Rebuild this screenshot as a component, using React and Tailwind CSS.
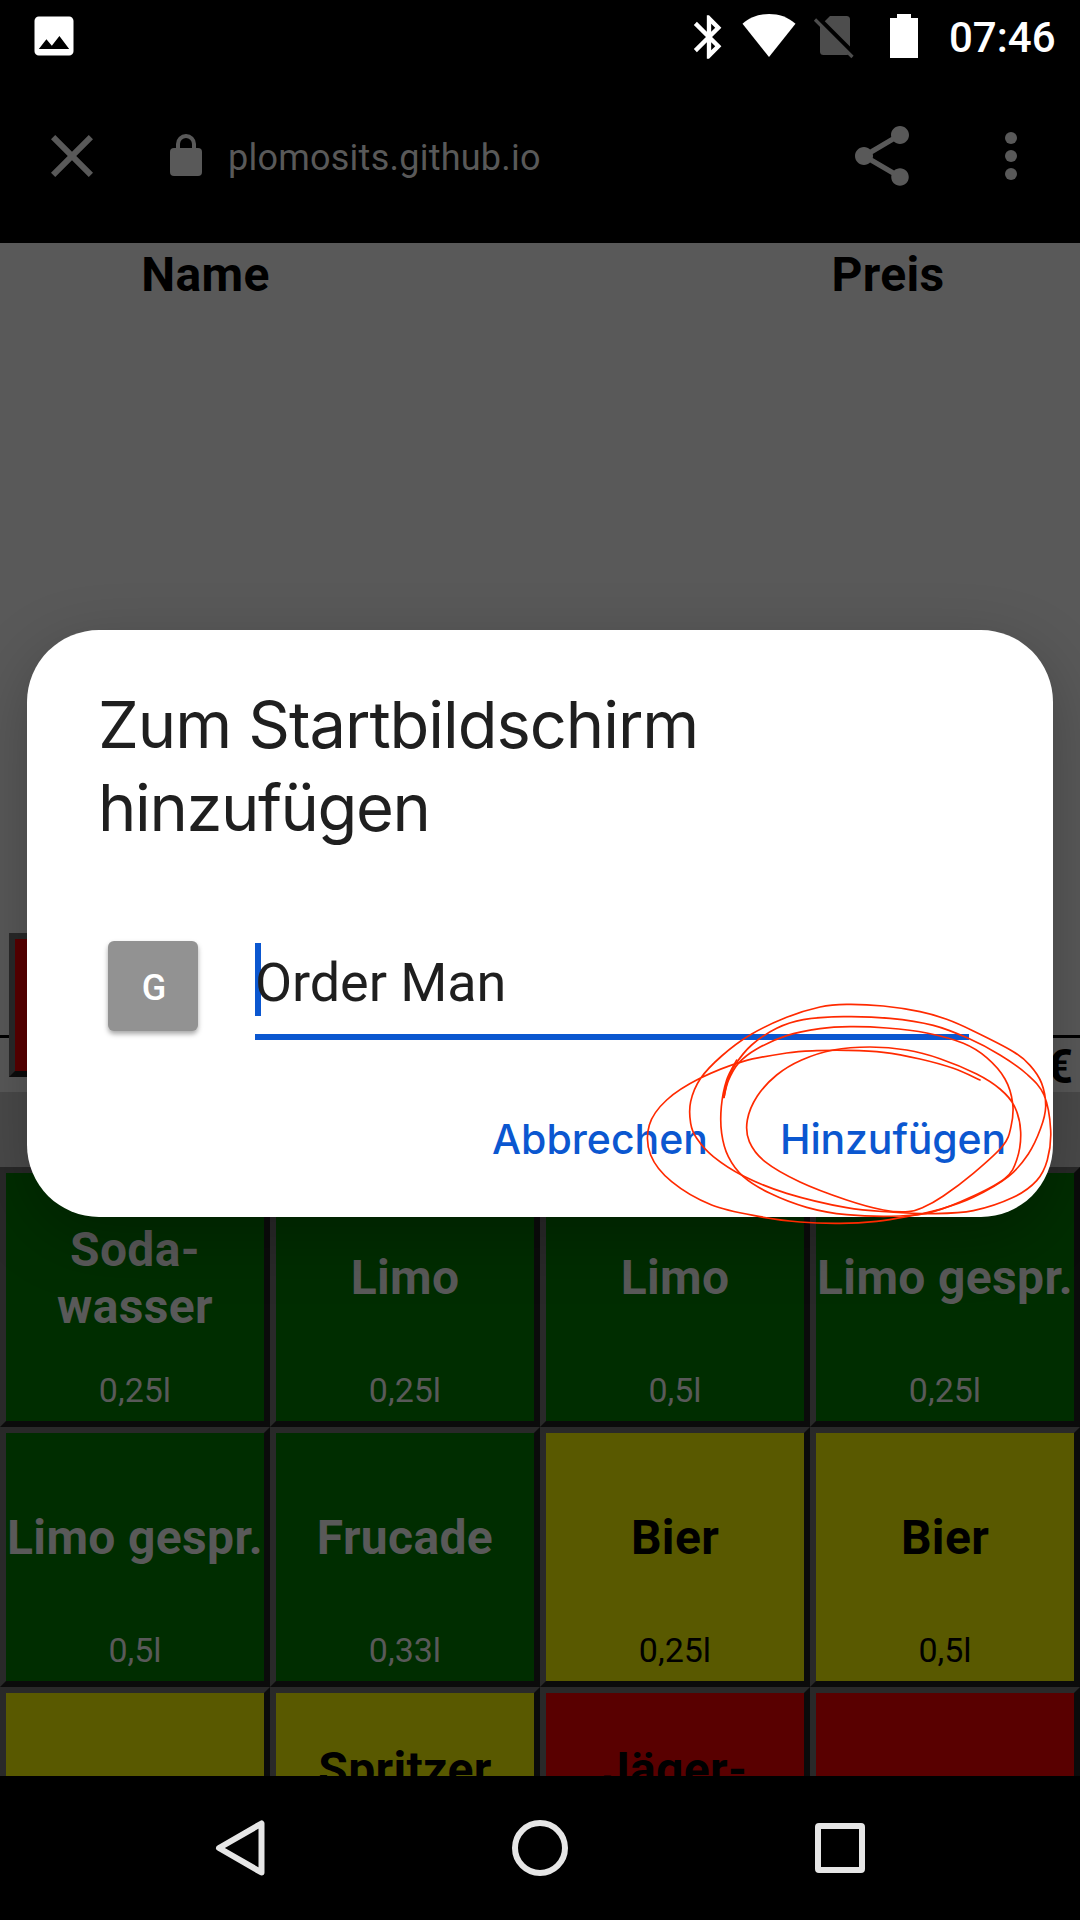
const scribbles = [
  [[1140,360],[1060,325],[960,297],[850,277],[740,271],[650,272],[560,279],[430,304],[300,355],[200,420],[148,495],[152,585],[215,665],[335,735],[480,770],[600,786],[720,790],[830,784],[920,770],[1020,748],[1120,712],[1225,650],[1285,582],[1322,505],[1337,440],[1325,370],[1290,316],[1240,275],[1120,213],[1040,178],[960,155],[850,138],[740,133],[660,141],[560,172],[450,225],[365,288],[302,355],[272,425],[272,490],[290,535],[340,590],[430,648],[560,700],[740,743],[870,756],[1000,761],[1120,752],[1240,712],[1310,662],[1342,600],[1352,510],[1332,405],[1280,342],[1200,285],[1105,235],[1000,196],[870,175],[730,170],[610,179],[530,205],[455,255],[405,315],[382,365],[372,412]],
  [[372,412],[385,362],[415,310],[470,267],[560,227],[660,206],[750,200],[860,204],[980,219],[1090,250],[1160,293],[1215,357],[1238,430],[1233,500],[1208,558],[1120,640],[1030,708],[970,742],[925,755],[850,750],[740,720],[600,666],[495,605],[448,545],[442,480],[472,408],[530,345],[605,300],[700,270],[810,261],[920,270],[1020,296],[1130,342],[1200,387],[1243,438],[1262,515],[1250,600],[1215,655],[1120,708],[1000,755],[900,768],[740,764],[620,742],[510,700],[430,650],[385,590],[365,520],[364,440],[380,360],[410,300]],
];

// Catmull-Rom spline through the points, written as cubic segments
function smooth(p) {
  let d = `M${p[0]}`;
  for (let i = 0; i < p.length - 1; i++) {
    const a = p[i - 1] || p[i], b = p[i], c = p[i + 1], e = p[i + 2] || c;
    d += `C${b[0] + (c[0] - a[0]) / 6},${b[1] + (c[1] - a[1]) / 6} ${c[0] - (e[0] - b[0]) / 6},${c[1] - (e[1] - b[1]) / 6} ${c[0]},${c[1]}`;
  }
  return d;
}

const green = "bg-[#002d00] text-[#595959]";
const yellow = "bg-[#595900] text-black";
const red = "bg-[#590000] text-black";
const products = [
  { name: ["Soda-", "wasser"], size: "0,25l", tone: green },
  { name: ["Limo"], size: "0,25l", tone: green },
  { name: ["Limo"], size: "0,5l", tone: green },
  { name: ["Limo gespr."], size: "0,25l", tone: green },
  { name: ["Limo gespr."], size: "0,5l", tone: green },
  { name: ["Frucade"], size: "0,33l", tone: green },
  { name: ["Bier"], size: "0,25l", tone: yellow },
  { name: ["Bier"], size: "0,5l", tone: yellow },
  { name: [], size: "", tone: yellow },
  { name: ["Spritzer", ""], size: "", tone: yellow },
  { name: ["Jäger-", ""], size: "", tone: red },
  { name: [], size: "", tone: red },
];

const bevel = "border-6 border-t-[#292929] border-l-[#292929] border-r-[#0b0b0b] border-b-[#0b0b0b]";

function Product({ name, size, tone }) {
  return (
    <button className={`flex h-[260px] flex-col whitespace-nowrap ${bevel} ${tone}`}>
      <span className="flex h-[198px] w-full flex-col items-center justify-center pt-[11px] text-[48px] leading-[57px] font-bold tracking-[0.35px]">
        {name.map((line, i) => (
          <span key={i} className="block h-[57px]">{line}</span>
        ))}
      </span>
      <span className="-mt-px w-full text-center text-[34px] leading-10">{size}</span>
    </button>
  );
}

function StatusBar() {
  return (
    <div className="flex h-[72px] shrink-0 items-start text-white">
      <svg className="mt-[10px] ml-7 size-[52px]" viewBox="0 0 24 24" fill="currentColor">
        <path d="M21 19V5c0-1.1-.9-2-2-2H5c-1.1 0-2 .9-2 2v14c0 1.1.9 2 2 2h14c1.1 0 2-.9 2-2zM8.500 13.500l2.500 3.010L14.500 12l4.500 6H5l3.500-4.500z" />
      </svg>
      <svg className="mt-[11px] ml-[603px] size-[52px]" viewBox="0 0 24 24" fill="currentColor">
        <path d="M17.710 7.710 12 2h-1v7.590L6.410 5 5 6.410 10.590 12 5 17.590 6.410 19 11 14.410V22h1l5.710-5.710-4.300-4.290 4.300-4.290zM13 5.830l1.880 1.880L13 9.590V5.830zm1.880 10.460L13 18.170v-3.760l1.880 1.880z" />
      </svg>
      <svg className="mt-3.5 ml-[7px] h-11 w-[54px]" viewBox="0 0 54 44" fill="currentColor">
        <path d="M.5 9.800C8 3 17 0 27 0s19 3 26.500 9.800L27 43z" />
      </svg>
      <svg className="mt-3.5 ml-[17px] h-[46px] w-[42px]" viewBox="0 0 42 46">
        <path d="M17 2h16.500q3.500 0 3.500 3.500v32q0 3.500-3.500 3.500H10.500Q7 41 7 37.500V12z" fill="#4d4d4d" />
        <path d="M3.500 2.500 42 41" stroke="#000" strokeWidth="5" />
        <path d="M2 5.500 39.500 43" stroke="#4d4d4d" strokeWidth="3.200" />
      </svg>
      <svg className="mt-3.5 ml-[35px] h-11 w-7" viewBox="0 0 28 44" fill="currentColor">
        <path d="M7 0h14v4h7v40H0V4h7z" />
      </svg>
      <span className="mt-[13px] ml-[31px] text-[42px] leading-[50px] font-medium">07:46</span>
    </div>
  );
}

function Toolbar() {
  return (
    <div className="flex h-[168px] shrink-0 items-center text-[#595959]">
      <svg className="ml-9 size-[72px]" viewBox="0 0 24 24" fill="currentColor">
        <path d="M19 6.410 17.590 5 12 10.590 6.410 5 5 6.410 10.590 12 5 17.590 6.410 19 12 13.410 17.590 19 19 17.590 13.410 12z" />
      </svg>
      <svg className="ml-[54px] size-12" viewBox="0 0 24 24">
        <rect x="4" y="8" width="16" height="14" rx="2" fill="currentColor" />
        <path d="M8 9V6a4 4 0 0 1 8 0v3" fill="none" stroke="currentColor" strokeWidth="2" />
      </svg>
      <span className="ml-[18px] grow pt-1 text-[36px] leading-[42px] tracking-[0.24px]">plomosits.github.io</span>
      <svg className="size-[72px]" viewBox="0 0 24 24" fill="currentColor">
        <path d="M18 16.080c-.76 0-1.440.3-1.960.77L8.910 12.700c.05-.23.09-.46.09-.7s-.04-.47-.09-.7l7.050-4.110c.54.5 1.250.81 2.040.81 1.660 0 3-1.340 3-3s-1.340-3-3-3-3 1.340-3 3c0 .24.04.47.09.7L8.040 9.810C7.500 9.310 6.790 9 6 9c-1.660 0-3 1.340-3 3s1.340 3 3 3c.79 0 1.500-.31 2.040-.81l7.120 4.160c-.05.21-.08.43-.08.65 0 1.610 1.310 2.920 2.920 2.920s2.920-1.310 2.920-2.920-1.310-2.920-2.920-2.920z" />
      </svg>
      <svg className="mr-[33px] ml-[57px] size-[72px]" viewBox="0 0 24 24" fill="currentColor">
        <circle cx="12" cy="6" r="2" />
        <circle cx="12" cy="12" r="2" />
        <circle cx="12" cy="18" r="2" />
      </svg>
    </div>
  );
}

function OrderPage() {
  return (
    <div className="flex h-[1533px] shrink-0 flex-col overflow-hidden bg-[#595959] text-black">
      <div className="grid h-[690px] shrink-0 grid-cols-[411px_285px_384px] content-start pt-[3px] text-center text-[48px] leading-[57px] font-bold tracking-[0.3px]">
        <span>Name</span>
        <span />
        <span>Preis</span>
      </div>
      <div className="flex h-[159px] shrink-0 items-start">
        <div className="mt-[102px] h-[3px] w-[9px] bg-black" />
        <div className={`h-36 w-[262px] ${bevel} bg-[#590000]`} />
        <div className="mt-[102px] grow border-t-[3px] border-black pr-[7px] text-right text-[48px] leading-[57px] font-bold">€</div>
      </div>
      <div className="h-[75px] shrink-0 bg-[#4a4a4a]" />
      <div className="grid shrink-0 grid-cols-[repeat(4,270px)]">
        {products.map((p, i) => (
          <Product key={i} {...p} />
        ))}
      </div>
    </div>
  );
}

function NavBar() {
  return (
    <div className="flex h-36 shrink-0 items-center text-[#e6e6e6]">
      <svg className="ml-[215px] h-14 w-[50px]" viewBox="0 0 50 56" fill="none" stroke="currentColor" strokeWidth="6" strokeLinejoin="round">
        <path d="M46.500 3.500v49L4 28z" />
      </svg>
      <div className="ml-[247px] size-14 rounded-full border-6 border-current" />
      <div className="ml-[247px] size-[50px] rounded-[4px] border-6 border-current" />
    </div>
  );
}

function Dialog() {
  return (
    <div className="absolute top-[630px] left-[27px] flex h-[587px] w-[1026px] flex-col rounded-[72px] bg-white px-[72px] pt-[53px] text-[#1f1f1f] shadow-[0_20px_64px_rgba(0,0,0,0.25)]">
      <h1 className="-ml-px font-['Inter','Liberation_Sans',sans-serif] text-[65px] leading-[83px] tracking-[-1.05px]">
        Zum Startbildschirm
        <br />
        <span className="tracking-[-1.4px]">hinzufügen</span>
      </h1>
      <div className="mt-[90px] flex items-start pl-[9px]">
        <div className="mt-[2px] flex size-[90px] items-center justify-center rounded-md bg-[#929292] pt-[3px] pl-[2px] text-[36px] font-medium text-white shadow-[0_3px_5px_rgba(0,0,0,0.35)]">G</div>
        <div className="ml-[57px] flex h-[101px] w-[714px] items-start border-b-6 border-[#0b57d0]">
          <span className="mt-1 h-[73px] w-1.5 bg-[#0b57d0]" />
          <span className="relative -ml-1.5 mt-3 text-[54px] leading-[63px] tracking-[-0.1px]">Order Man</span>
        </div>
      </div>
      <div className="-mr-[25px] mt-[74px] flex justify-end gap-[72px] font-['Inter','Liberation_Sans',sans-serif] text-[41px] leading-[50px] font-medium text-[#0b57d0]">
        <button>Abbrechen</button>
        <button className="tracking-[-0.15px]">Hinzufügen</button>
      </div>
    </div>
  );
}

export default function App() {
  return (
    <div className="relative flex h-[1920px] w-[1080px] flex-col overflow-hidden bg-black font-['Roboto',sans-serif]">
      <StatusBar />
      <Toolbar />
      <div className="h-[3px] shrink-0 bg-black" />
      <OrderPage />
      <NavBar />
      <Dialog />
      <svg className="pointer-events-none absolute top-[960px] left-[600px] h-[300px] w-[480px]" viewBox="0 0 1440 900" fill="none" stroke="#ff2a00" strokeWidth="5" strokeLinecap="round">
        {scribbles.map((points, i) => (
          <path key={i} d={smooth(points)} />
        ))}
      </svg>
    </div>
  );
}
